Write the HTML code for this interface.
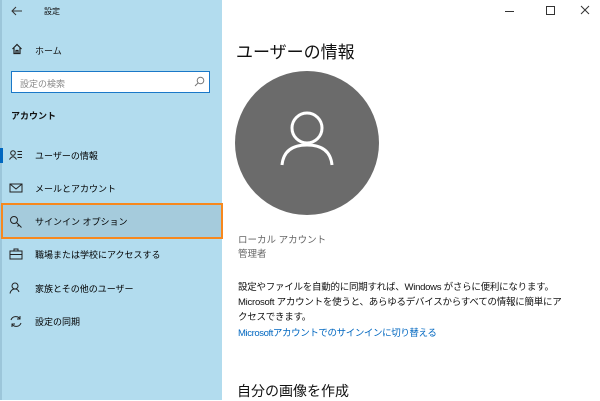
<!DOCTYPE html><html><head><meta charset="utf-8"><style>
body{margin:0;width:600px;height:400px;overflow:hidden;font-family:"Liberation Sans","Noto Sans CJK JP",sans-serif;background:#fff;position:relative}
.sb{position:absolute;left:0;top:0;width:222px;height:400px;background:#b2dcee}
.a{position:absolute;white-space:nowrap;color:#111}
.it{position:absolute;left:0;width:222px;height:34px;font-size:9px}
.it span{position:absolute;left:35px;top:11px}
.it svg{position:absolute;left:9px;top:11px}
</style></head><body>
<div class="sb">
<div style="position:absolute;left:0;top:0;width:2px;height:400px;background:#9cc6da"></div>
<svg style="position:absolute;left:11px;top:6px" width="12" height="10"><path d="M11 5H1M5 1L1 5L5 9" stroke="#333" fill="none" stroke-width="1"/></svg>
<div class="a" style="left:44px;top:6px;font-size:8px">設定</div>
<svg style="position:absolute;left:11px;top:43px" width="12" height="12"><path d="M1.5 6L6 1.5L10.5 6M3 5V10.5H9V5M5 10.5V7.5H7V10.5" stroke="#222" fill="none" stroke-width="1.2"/></svg>
<div class="a" style="left:35px;top:44px;font-size:9px">ホーム</div>
<div style="position:absolute;left:11px;top:71px;width:197px;height:20px;border:1.5px solid #1a78c8;background:#fff"></div>
<div class="a" style="left:20px;top:77px;font-size:9px;color:#888">設定の検索</div>
<svg style="position:absolute;left:194px;top:76px" width="11" height="11"><circle cx="6.5" cy="4.5" r="3.3" stroke="#777" fill="none"/><path d="M4 7L1 10" stroke="#777"/></svg>
<div class="a" style="left:11px;top:109px;font-size:9px;font-weight:bold">アカウント</div>
<div style="position:absolute;left:0;top:148px;width:3px;height:15px;background:#0067c0"></div>
<div class="it" style="top:138px"><svg width="14" height="12"><circle cx="4" cy="4" r="2.3" stroke="#222" fill="none"/><path d="M0.5 10.5Q4 5 7.5 10.5M8.5 2.5H13M8.5 5.5H13M8.5 8.5H13" stroke="#222" fill="none"/></svg><span>ユーザーの情報</span></div>
<div class="it" style="top:171px"><svg width="14" height="12"><rect x="1" y="2" width="12" height="8" stroke="#222" fill="none"/><path d="M1 2L7 7L13 2" stroke="#222" fill="none"/></svg><span>メールとアカウント</span></div>
<div style="position:absolute;left:1px;top:203px;width:218px;height:32px;background:#a5cbdc;border:2px solid #f7881d"></div>
<div class="it" style="top:204px"><svg width="14" height="13"><circle cx="5" cy="5" r="3.5" stroke="#222" fill="none"/><path d="M7.5 7.5L12.5 12.5M10 10L8.5 11.5" stroke="#222" fill="none"/></svg><span>サインイン オプション</span></div>
<div class="it" style="top:237px"><svg width="14" height="12"><rect x="1" y="3" width="12" height="8" stroke="#222" fill="none"/><path d="M5 3V1H9V3M1 6.5H13" stroke="#222" fill="none"/></svg><span>職場または学校にアクセスする</span></div>
<div class="it" style="top:271px"><svg width="14" height="12"><circle cx="6" cy="4" r="3" stroke="#222" fill="none"/><path d="M1 11.5Q2 7 6 7Q9 7 10 10" stroke="#222" fill="none"/></svg><span>家族とその他のユーザー</span></div>
<div class="it" style="top:304px"><svg width="14" height="13"><path d="M2 5A5 5 0 0 1 11 4M12 8A5 5 0 0 1 3 9M11 1V4H8M3 12V9H6" stroke="#222" fill="none"/></svg><span>設定の同期</span></div>
</div>
<div style="position:absolute;left:505px;top:11px;width:9px;height:1px;background:#333"></div>
<div style="position:absolute;left:546px;top:6px;width:7px;height:7px;border:1px solid #333"></div>
<svg style="position:absolute;left:580px;top:5px" width="10" height="10"><path d="M1 1L9 9M9 1L1 9" stroke="#333"/></svg>
<div class="a" style="left:236px;top:38px;font-size:17px">ユーザーの情報</div>
<svg style="position:absolute;left:234px;top:70px" width="146" height="146"><circle cx="73" cy="73" r="72" fill="#6b6b6b"/><circle cx="73" cy="58" r="15" stroke="#fff" stroke-width="3" fill="none"/><path d="M48 95Q50 75 73 75Q96 75 98 95" stroke="#fff" stroke-width="3" fill="none"/></svg>
<div class="a" style="left:238px;top:232px;font-size:9.5px;color:#666">ローカル アカウント</div>
<div class="a" style="left:238px;top:246px;font-size:9.5px;color:#666">管理者</div>
<div class="a" style="left:238px;top:280px;font-size:9.5px;line-height:15px;letter-spacing:-0.25px;color:#111">設定やファイルを自動的に同期すれば、Windows がさらに便利になります。<br>Microsoft アカウントを使うと、あらゆるデバイスからすべての情報に簡単にア<br>クセスできます。</div>
<div class="a" style="left:238px;top:325px;font-size:9.5px;letter-spacing:-0.4px;color:#0067c0">Microsoftアカウントでのサインインに切り替える</div>
<div class="a" style="left:237px;top:381px;font-size:14px">自分の画像を作成</div>
</body></html>
